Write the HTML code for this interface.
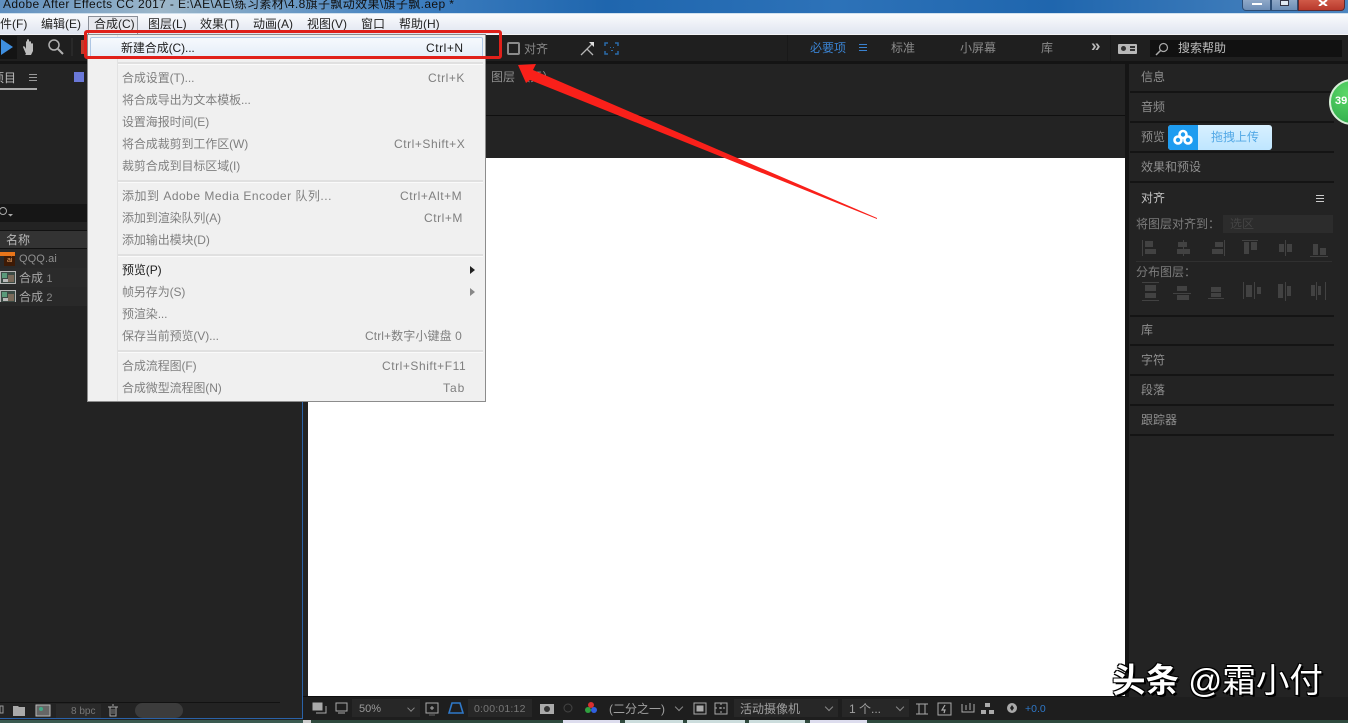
<!DOCTYPE html>
<html><head><meta charset="utf-8"><style>
html,body{margin:0;padding:0;background:#232323}
#r{position:relative;width:1348px;height:723px;overflow:hidden;background:#232323;font-family:"Liberation Sans","Noto Sans CJK SC",sans-serif;font-size:12px;color:#9a9a9a}
#r div,#r span.a{position:absolute}
.t{white-space:nowrap;line-height:16px}
.m{color:#222;top:16px;font-size:12px}
.i{left:122px;color:#7f7f7f;font-size:12px;white-space:nowrap;line-height:16px;letter-spacing:-.1px}
.s{color:#7f7f7f;font-size:12px;white-space:nowrap;line-height:16px;letter-spacing:.55px}
.sep{left:118px;width:365px;height:2px;background:#e0e0e0;border-bottom:1px solid #fafafa}
.p{left:1141px;color:#8f8f8f;font-size:12px;white-space:nowrap;line-height:16px}
.l{left:1130px;width:204px;height:2px;background:#141414}
</style></head><body><div id="r">
<!-- title bar -->
<div style="left:0;top:0;width:1348px;height:13px;background:linear-gradient(90deg,#5f8fc0 0,#9db7c9 12%,#3f7fc0 30%,#1f66ae 45%,#2d72b8 62%,#1f66ae 78%,#4d86c0 100%)"></div>
<div class="t" style="left:3px;top:-4px;color:#111;font-size:12px;letter-spacing:.37px">Adobe After Effects CC 2017 - E:\AE\AE\练习素材\4.8旗子飘动效果\旗子飘.aep *</div>
<div style="left:1242px;top:0;width:29px;height:11px;background:linear-gradient(#8fa8c8,#6c8db5);border:1px solid #2c4c74;border-top:0;border-radius:0 0 0 4px;box-sizing:border-box"></div>
<div style="left:1271px;top:0;width:27px;height:11px;background:linear-gradient(#8fa8c8,#6c8db5);border:1px solid #2c4c74;border-top:0;box-sizing:border-box"></div>
<div style="left:1298px;top:0;width:47px;height:11px;background:linear-gradient(#d05a48,#b8392c);border:1px solid #5c2a30;border-top:0;border-radius:0 0 4px 0;box-sizing:border-box"></div>
<div style="left:1252px;top:3px;width:10px;height:2px;background:#fff"></div>
<div style="left:1280px;top:0;width:7px;height:4px;background:#dfe8f2;border:1px solid #334"></div>
<svg style="position:absolute;left:1316px;top:0" width="14" height="6"><path d="M3 0L7 3L11 0M7 3L3 6M7 3L11 6" stroke="#fff" stroke-width="2" fill="none"/></svg>
<div style="left:0;top:13px;width:1348px;height:1px;background:#cfe0ee"></div>
<!-- menu bar -->
<div style="left:0;top:14px;width:1348px;height:20px;background:linear-gradient(#fafbfd,#e0e5f0)"></div>
<div style="left:88px;top:16px;width:50px;height:19px;box-sizing:border-box;border:1px solid #8a8f98;border-bottom:0;background:#e8e9ee"></div>
<div class="t m" style="left:-12px">文件(F)</div>
<div class="t m" style="left:41px">编辑(E)</div>
<div class="t m" style="left:94px">合成(C)</div>
<div class="t m" style="left:148px">图层(L)</div>
<div class="t m" style="left:200px">效果(T)</div>
<div class="t m" style="left:253px">动画(A)</div>
<div class="t m" style="left:307px">视图(V)</div>
<div class="t m" style="left:361px">窗口</div>
<div class="t m" style="left:399px">帮助(H)</div>
<!-- toolbar -->
<div style="left:0;top:34px;width:1348px;height:1px;background:#f4f4f6"></div>
<div style="left:0;top:35px;width:1348px;height:26px;background:#1f1f1f"></div>
<div style="left:0;top:61px;width:1348px;height:3px;background:#141414"></div>
<div style="left:0;top:36px;width:17px;height:23px;background:#141414"></div>
<svg style="position:absolute;left:0;top:38px" width="80" height="20"><path d="M1 1V17L13 9Z" fill="#3f8fe0"/><path d="M26 16L23 9c0-1 1-1 2 0l1 2V4c0-1 1-1 1 0V2c0-1 2-1 2 0v2c0-1 2-1 2 0v2c0-1 2-1 2 0v7l-2 4h-6z" fill="#bdbdbd"/><circle cx="54" cy="7" r="5" fill="none" stroke="#b0b0b0" stroke-width="1.5"/><path d="M58 11l5 5" stroke="#b0b0b0" stroke-width="2"/><path d="M72 0v18" stroke="#333"/></svg>
<div style="left:81px;top:40px;width:4px;height:14px;background:#c23a2a"></div>
<div style="left:507px;top:42px;width:13px;height:13px;box-sizing:border-box;border:2px solid #8a8a8a;border-radius:2px"></div>
<div class="t" style="left:524px;top:41px;color:#888">对齐</div>
<svg style="position:absolute;left:580px;top:41px" width="45" height="15"><path d="M1 14L7 8l6 6M5 10L13 2" stroke="#b5b5b5" fill="none" stroke-width="1.3"/><path d="M9 1h5v5z" fill="#ddd"/><path d="M25 5V2h3M35 2h3v3M38 10v3h-3M28 13h-3v-3" stroke="#2a6aa8" fill="none" stroke-width="1.5"/><path d="M30 6h1v1h-1zM33 6h1v1h-1zM31 9h2v1h-2z" fill="#2a6aa8"/></svg>
<div style="left:787px;top:35px;width:1px;height:26px;background:#191919"></div>
<div class="t" style="left:810px;top:40px;color:#3a82d0">必要项</div>
<div style="left:859px;top:44px;width:8px;height:1px;background:#3a82d0;box-shadow:0 3px 0 #3a82d0,0 6px 0 #3a82d0"></div>
<div class="t" style="left:891px;top:40px;color:#8a8a8a">标准</div>
<div class="t" style="left:960px;top:40px;color:#8a8a8a">小屏幕</div>
<div class="t" style="left:1041px;top:40px;color:#8a8a8a">库</div>
<div class="t" style="left:1091px;top:38px;color:#bbb;font-weight:bold;font-size:17px">»</div>
<div style="left:1110px;top:35px;width:1px;height:26px;background:#191919"></div>
<div style="left:1118px;top:44px;width:19px;height:10px;background:#b8b8b8;border-radius:1px"></div>
<div style="left:1121px;top:46px;width:5px;height:5px;background:#333;border-radius:50%"></div>
<div style="left:1130px;top:46px;width:5px;height:2px;background:#333;box-shadow:0 3px 0 #333"></div>
<div style="left:1150px;top:40px;width:192px;height:17px;background:#111"></div>
<svg style="position:absolute;left:1155px;top:42px" width="14" height="14"><circle cx="8.500" cy="5.500" r="4" fill="none" stroke="#aaa" stroke-width="1.200"/><path d="M5.500 8.500L1 13" stroke="#aaa" stroke-width="1.500"/></svg>
<div class="t" style="left:1178px;top:40px;color:#bdbdbd">搜索帮助</div>
<!-- left panel -->
<div class="t" style="left:-8px;top:70px;color:#bbb">项目</div>
<div style="left:0;top:88px;width:37px;height:2px;background:#aaa"></div>
<div style="left:29px;top:74px;width:8px;height:1px;background:#999;box-shadow:0 3px 0 #999,0 6px 0 #999"></div>
<div style="left:74px;top:72px;width:10px;height:10px;background:#6a78d8"></div>
<div style="left:0;top:204px;width:88px;height:18px;background:#161616"></div>
<svg style="position:absolute;left:0;top:206px" width="16" height="12"><circle cx="3" cy="5" r="3.500" fill="none" stroke="#aaa"/><path d="M8 8h5l-2.500 2.500z" fill="#aaa"/></svg>
<div style="left:0;top:230px;width:88px;height:19px;background:#333;border-top:1px solid #111;border-bottom:1px solid #111;box-sizing:border-box"></div>
<div class="t" style="left:6px;top:232px;color:#b8b8b8">名称</div>
<div style="left:0;top:249px;width:88px;height:19px;background:#292929"></div>
<div style="left:0;top:268px;width:88px;height:19px;background:#2b2b2b"></div>
<div style="left:0;top:287px;width:88px;height:19px;background:#292929"></div>
<div style="left:0;top:252px;width:15px;height:4px;background:#e8751a"></div>
<div style="left:4px;top:256px;width:11px;height:10px;background:#3d1a05"></div>
<div style="left:7px;top:257px;font-size:7px;color:#e8a060;line-height:8px">ai</div>
<div class="t" style="left:19px;top:251px;color:#8f8f8f;font-size:11px;letter-spacing:.1px">QQQ.ai</div>
<svg style="position:absolute;left:0;top:270px" width="16" height="32"><g id="c"><rect x=".5" y="1.500" width="15" height="12" fill="#3c4a44" stroke="#b5b5b5"/><path d="M2 3h5v5H2z" fill="#5a9a7a"/><path d="M8 5h6v7H8z" fill="#7a6a5a"/><path d="M3 9h5v3H3z" fill="#b9b9b9"/></g><g transform="translate(0,19)"><rect x=".5" y="1.500" width="15" height="12" fill="#3c4a44" stroke="#b5b5b5"/><path d="M2 3h5v5H2z" fill="#5a9a7a"/><path d="M8 5h6v7H8z" fill="#7a6a5a"/><path d="M3 9h5v3H3z" fill="#b9b9b9"/></g></svg>
<div class="t" style="left:19px;top:270px;color:#a8a8a8">合成 <span style="font-size:11px;color:#888">1</span></div>
<div class="t" style="left:19px;top:289px;color:#a8a8a8">合成 <span style="font-size:11px;color:#888">2</span></div>
<div style="left:302px;top:64px;width:1px;height:655px;background:#2a62a8"></div>
<div style="left:0;top:718px;width:303px;height:1px;background:#2a62a8"></div>
<div style="left:0;top:702px;width:280px;height:1px;background:#121212"></div>
<svg style="position:absolute;left:0;top:703px" width="190" height="15"><path d="M0 3h3v7H0z" fill="none" stroke="#999"/><path d="M13 3h5l1 1h6v9H13z" fill="#aaa"/><rect x="36" y="2" width="14" height="11" fill="#666" stroke="#bbb"/><circle cx="41" cy="6" r="2" fill="#4a8"/><path d="M108 4h10M110 4v9h6V4M112 2h2" stroke="#aaa" fill="none"/><path d="M112 6v5M114 6v5" stroke="#aaa" stroke-width=".7"/></svg>
<div style="left:56px;top:704px;width:45px;height:14px;background:#2a2a2a"></div>
<div class="t" style="left:71px;top:704px;color:#777;font-size:10px">8 bpc</div>
<div style="left:135px;top:703px;width:48px;height:15px;background:#3c3c3c;border-radius:8px"></div>
<!-- comp panel -->
<div class="t" style="left:491px;top:69px;color:#8f8f8f">图层 （无）</div>
<div style="left:303px;top:115px;width:822px;height:1px;background:#0f0f0f"></div>
<div style="left:308px;top:158px;width:817px;height:538px;background:#fff"></div>
<div style="left:303px;top:696px;width:822px;height:1px;background:#0f0f0f"></div>
<!-- right panel -->
<div style="left:1125px;top:64px;width:4px;height:655px;background:#151515"></div>
<div class="p" style="top:69px">信息</div>
<div class="l" style="top:91px"></div>
<div class="p" style="top:99px">音频</div>
<div class="l" style="top:121px"></div>
<div class="p" style="top:129px">预览</div>
<div class="l" style="top:151px"></div>
<div class="p" style="top:159px">效果和预设</div>
<div class="l" style="top:181px"></div>
<div class="p" style="top:190px;color:#c4c4c4">对齐</div>
<div style="left:1316px;top:195px;width:8px;height:1px;background:#ccc;box-shadow:0 3px 0 #ccc,0 6px 0 #ccc"></div>
<div class="p" style="left:1136px;top:216px;color:#7c7c7c">将图层对齐到：</div>
<div style="left:1223px;top:215px;width:110px;height:18px;background:#2c2c2c"></div>
<div class="t" style="left:1230px;top:216px;color:#444">选区</div>
<div style="left:1136px;top:261px;width:196px;height:1px;background:#303030"></div>
<svg style="position:absolute;left:1140px;top:238px" width="190" height="70" fill="#424242" stroke="none">
<path d="M2 2h1v16H2zM5 3h8v6H5zM5 11h11v5H5zM43 2h1v16h-1zM38 4h9v5h-9zM37 11h13v5H37zM84 2h1v16h-1zM75 4h8v5h-8zM72 11h11v5H72zM102 2h16v1h-16zM104 4h5v12h-5zM111 4h6v8h-6zM145 2h1v16h-1zM139 6h5v8h-5zM147 6h5v8h-5zM170 18h18v1h-18zM173 6h5v11h-5zM180 10h6v7h-6z"/>
<g transform="translate(0,4)"><path d="M2 40h17v1H2zM2 58h17v1H2zM5 43h11v6H5zM5 51h11v5H5z"/><path d="M37 44h10v5H37zM33 51h18v1H33zM37 53h12v5H37z"/><path d="M68 56h16v1H68zM71 45h10v5H71zM71 51h10v4H71z"/><path d="M103 40h1v17h-1zM114 40h1v17h-1zM106 43h6v12h-6zM117 45h4v7h-4z"/><path d="M138 42h5v14h-5zM147 44h4v10h-4zM145 40h1v19h-1z"/><path d="M171 43h4v11h-4zM178 44h3v9h-3zM176 40h1v18h-1zM185 40h1v18h-1z"/></g></svg>
<div class="p" style="left:1136px;top:264px;color:#7c7c7c">分布图层：</div>
<div class="l" style="top:315px"></div>
<div class="p" style="top:322px">库</div>
<div class="l" style="top:344px"></div>
<div class="p" style="top:352px">字符</div>
<div class="l" style="top:374px"></div>
<div class="p" style="top:382px">段落</div>
<div class="l" style="top:404px"></div>
<div class="p" style="top:412px">跟踪器</div>
<div class="l" style="top:434px"></div>
<!-- green badge -->
<div style="left:1329px;top:79px;width:46px;height:46px;box-sizing:border-box;border:2px solid #d8efd8;border-radius:50%;background:radial-gradient(circle at 40% 30%,#5cd868,#28a446)"></div>
<div class="t" style="left:1335px;top:93px;color:#fff;font-weight:bold;font-size:11px">39</div>
<!-- upload widget -->
<div style="left:1168px;top:125px;width:104px;height:25px;background:linear-gradient(#d8f0ff,#bfe6ff);border-radius:3px"></div>
<div style="left:1168px;top:125px;width:30px;height:25px;background:#1e9cf0;border-radius:3px 0 0 3px"></div>
<svg style="position:absolute;left:1172px;top:129px" width="22" height="17"><g fill="none" stroke="#fff" stroke-width="2.600"><circle cx="11" cy="5.500" r="3.500"/><circle cx="6" cy="11" r="3.500"/><circle cx="16" cy="11" r="3.500"/></g></svg>
<div class="t" style="left:1211px;top:129px;color:#52a8e6">拖拽上传</div>
<!-- dropdown menu -->
<div style="left:87px;top:34px;width:399px;height:368px;background:#f0f0f0;border:1px solid #8c8c8c;box-sizing:border-box"></div>
<div style="left:117px;top:35px;width:1px;height:366px;background:#e2e2e2"></div>
<div style="left:90px;top:37px;width:393px;height:21px;background:linear-gradient(#f6f9fd,#e4edf8);border:1px solid #aec6e4;box-sizing:border-box;border-radius:2px"></div>
<div class="i" style="left:121px;top:40px;color:#1c1c1c">新建合成(C)...</div>
<div class="s" style="left:426px;top:40px;color:#1c1c1c">Ctrl+N</div>
<div class="sep" style="top:62px"></div>
<div class="i" style="top:70px">合成设置(T)...</div><div class="s" style="left:428px;top:70px">Ctrl+K</div>
<div class="i" style="top:92px">将合成导出为文本模板...</div>
<div class="i" style="top:114px">设置海报时间(E)</div>
<div class="i" style="top:136px">将合成裁剪到工作区(W)</div><div class="s" style="left:394px;top:136px">Ctrl+Shift+X</div>
<div class="i" style="top:158px">裁剪合成到目标区域(I)</div>
<div class="sep" style="top:180px"></div>
<div class="i" style="top:188px;letter-spacing:.5px">添加到 Adobe Media Encoder 队列...</div><div class="s" style="left:400px;top:188px">Ctrl+Alt+M</div>
<div class="i" style="top:210px">添加到渲染队列(A)</div><div class="s" style="left:424px;top:210px">Ctrl+M</div>
<div class="i" style="top:232px">添加输出模块(D)</div>
<div class="sep" style="top:254px"></div>
<div class="i" style="top:262px;color:#1c1c1c">预览(P)</div>
<div style="left:470px;top:266px;border-left:5px solid #222;border-top:4px solid transparent;border-bottom:4px solid transparent"></div>
<div class="i" style="top:284px">帧另存为(S)</div>
<div style="left:470px;top:288px;border-left:5px solid #888;border-top:4px solid transparent;border-bottom:4px solid transparent"></div>
<div class="i" style="top:306px">预渲染...</div>
<div class="i" style="top:328px">保存当前预览(V)...</div><div class="s" style="left:365px;top:328px;letter-spacing:.1px">Ctrl+数字小键盘 0</div>
<div class="sep" style="top:350px"></div>
<div class="i" style="top:358px">合成流程图(F)</div><div class="s" style="left:382px;top:358px">Ctrl+Shift+F11</div>
<div class="i" style="top:380px">合成微型流程图(N)</div><div class="s" style="left:443px;top:380px;letter-spacing:1px">Tab</div>
<!-- viewer bottom bar -->
<div style="left:303px;top:697px;width:1045px;height:23px;background:#1e1e1e"></div>
<svg style="position:absolute;left:312px;top:700px" width="710" height="17" fill="none" stroke="#aaa">
<rect x="1" y="3" width="9" height="7" fill="#aaa"/><path d="M4 13h10V6"/>
<rect x="24" y="3" width="11" height="8"/><path d="M26 13h7"/>
<path d="M114 3h12v10h-12zM120 6v4M118 8h4"/><path d="M117 15h6" stroke="#666"/>
<path d="M137 13l3-10h8l3 10z" stroke="#2f78c8" stroke-width="1.600"/>
<rect x="228" y="4" width="14" height="10" fill="#aaa" stroke="none"/><circle cx="235" cy="9" r="3" fill="#333" stroke="none"/>
<circle cx="256" cy="8" r="4" stroke="#444"/>
<circle cx="279" cy="5" r="3" fill="#d83030" stroke="none"/><circle cx="276" cy="10" r="3" fill="#30a040" stroke="none"/><circle cx="282" cy="10" r="3" fill="#3060e0" stroke="none"/>
<rect x="382" y="3" width="12" height="11"/><rect x="385" y="6" width="6" height="5" fill="#aaa"/>
<rect x="403" y="3" width="12" height="11"/><path d="M403 8h12M409 3v11" stroke-dasharray="2 2"/>
<path d="M604 4h12M604 14h12M607 4v10M613 4v10"/>
<rect x="626" y="3" width="13" height="12"/><path d="M633 5l-3 5h3l-1 3" stroke-width="1.200"/>
<path d="M650 4v8h12V4M654 5v5M658 3v7" />
<rect x="673" y="3" width="5" height="4" fill="#aaa" stroke="none"/><rect x="669" y="10" width="5" height="4" fill="#aaa" stroke="none"/><rect x="677" y="10" width="5" height="4" fill="#aaa" stroke="none"/>
<circle cx="700" cy="8" r="5" fill="#aaa" stroke="none"/><path d="M700 5l2 3-2 3-2-3z" fill="#222" stroke="none"/>
</svg>
<div style="left:352px;top:699px;width:68px;height:18px;background:#272727"></div>
<div class="t" style="left:359px;top:701px;color:#9a9a9a;font-size:11px">50%</div>
<div style="left:408px;top:705px;width:5px;height:5px;border-right:1px solid #888;border-bottom:1px solid #888;transform:rotate(45deg) scale(.9)"></div>
<div style="left:468px;top:699px;width:64px;height:18px;background:#272727"></div>
<div class="t" style="left:474px;top:701px;color:#777;font-size:10.500px;letter-spacing:.2px">0:00:01:12</div>
<div class="t" style="left:609px;top:701px;color:#a0a0a0">(二分之一)</div>
<div style="left:676px;top:704px;width:5px;height:5px;border-right:1px solid #888;border-bottom:1px solid #888;transform:rotate(45deg)"></div>
<div style="left:734px;top:699px;width:104px;height:18px;background:#272727"></div>
<div class="t" style="left:740px;top:701px;color:#a0a0a0">活动摄像机</div>
<div style="left:826px;top:704px;width:5px;height:5px;border-right:1px solid #888;border-bottom:1px solid #888;transform:rotate(45deg)"></div>
<div style="left:842px;top:699px;width:67px;height:18px;background:#272727"></div>
<div class="t" style="left:849px;top:701px;color:#a0a0a0">1 个...</div>
<div style="left:897px;top:704px;width:5px;height:5px;border-right:1px solid #888;border-bottom:1px solid #888;transform:rotate(45deg)"></div>
<div class="t" style="left:1025px;top:701px;color:#2f78c8;font-size:10.500px">+0.0</div>
<!-- bottom strip -->
<div style="left:0;top:720px;width:1348px;height:3px;background:#2f4a3e"></div>
<div style="left:0;top:720px;width:303px;height:3px;background:#3a5a50"></div>
<div style="left:303px;top:720px;width:8px;height:3px;background:#ccc"></div>
<div style="left:563px;top:720px;width:57px;height:3px;background:#dde"></div>
<div style="left:625px;top:720px;width:58px;height:3px;background:#cdd"></div>
<div style="left:687px;top:720px;width:58px;height:3px;background:#cdd"></div>
<div style="left:749px;top:720px;width:56px;height:3px;background:#cdd"></div>
<div style="left:810px;top:720px;width:57px;height:3px;background:#dde"></div>
<!-- annotations -->
<div style="left:84px;top:30px;width:418px;height:29px;box-sizing:border-box;border:3px solid #e0201a;border-radius:3px"></div>
<svg style="position:absolute;left:0;top:0" width="1348" height="723"><polygon points="518,65 536,64 533,70 877,218 877,219 530,80 526,83" fill="#f9201a"/></svg>
<!-- watermark -->
<div class="t" style="left:1112px;top:662px;font-size:33.500px;line-height:40px;color:#fff;text-shadow:2px 2px 0 #000,-1px -1px 0 #000,1px -1px 0 #000,-1px 1px 0 #000"><b>头条</b> @霜小付</div>
</div></body></html>
